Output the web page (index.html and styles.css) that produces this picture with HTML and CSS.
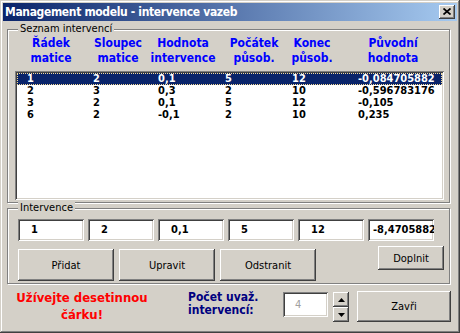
FILE: index.html
```html
<!DOCTYPE html>
<html lang="cs">
<head>
<meta charset="utf-8">
<title>Management modelu - intervence vazeb</title>
<link rel="stylesheet" href="styles.css">
</head>
<body>
<div class="window">
  <div class="titlebar">
    <span class="title">Management modelu - intervence vazeb</span>
    <div class="close">
      <svg width="8" height="7" viewBox="0 0 8 7"><path d="M0.5 0.5 L7.5 6.5 M7.5 0.5 L0.5 6.5" stroke="#000" stroke-width="1.7" fill="none"/></svg>
    </div>
  </div>
  <div class="content">
    <div class="frame frame-list">
      <span class="legend">Seznam intervencí</span>
      <div class="headers">
        <div class="hd">Řádek<br>matice</div>
        <div class="hd">Sloupec<br>matice</div>
        <div class="hd">Hodnota<br>intervence</div>
        <div class="hd">Počátek<br>působ.</div>
        <div class="hd">Konec<br>působ.</div>
        <div class="hd">Původní<br>hodnota</div>
      </div>
      <div class="listbox">
        <div class="row selected"><span>1</span><span>2</span><span>0,1</span><span>5</span><span>12</span><span>-0,084705882</span></div>
        <div class="row"><span>2</span><span>3</span><span>0,3</span><span>2</span><span>10</span><span>-0,596783176</span></div>
        <div class="row"><span>3</span><span>2</span><span>0,1</span><span>5</span><span>12</span><span>-0,105</span></div>
        <div class="row"><span>6</span><span>2</span><span>-0,1</span><span>2</span><span>10</span><span>0,235</span></div>
      </div>
    </div>
    <div class="frame frame-edit">
      <span class="legend">Intervence</span>
      <div class="fields">
        <div class="field">1</div>
        <div class="field">2</div>
        <div class="field">0,1</div>
        <div class="field">5</div>
        <div class="field">12</div>
        <div class="field field-long">-8,4705882353</div>
      </div>
      <div class="actions">
        <div class="btn btn-big">Přidat</div>
        <div class="btn btn-big">Upravit</div>
        <div class="btn btn-big">Odstranit</div>
        <div class="btn btn-small">Doplnit</div>
      </div>
    </div>
    <div class="footer">
      <div class="warning">Užívejte desetinnou<br>čárku!</div>
      <div class="count-label">Počet uvaž.<br>intervencí:</div>
      <div class="spin-input">4</div>
      <div class="spinner">
        <div class="spin-btn"><svg width="7" height="4" viewBox="0 0 7 4"><path d="M3.5 0 L7 4 L0 4 Z" fill="#000"/></svg></div>
        <div class="spin-btn"><svg width="7" height="4" viewBox="0 0 7 4"><path d="M0 0 L7 0 L3.5 4 Z" fill="#000"/></svg></div>
      </div>
      <div class="btn btn-close">Zavři</div>
    </div>
  </div>
</div>
</body>
</html>
```

FILE: styles.css
```css
* { box-sizing: border-box; }

html, body {
  margin: 0;
  background: #D4D0C8;
}

body {
  font-family: "DejaVu Sans Condensed", "DejaVu Sans", sans-serif;
  font-stretch: condensed;
  font-size: 11px;
  color: #000;
}

.window {
  width: 460px;
  height: 333px;
  padding: 3px;
  background: #D4D0C8;
  box-shadow: inset -1px -1px #404040, inset 1px 1px #D4D0C8,
              inset -2px -2px #808080, inset 2px 2px #FFFFFF;
  display: flex;
  flex-direction: column;
}

.titlebar {
  height: 18px;
  flex: none;
  display: flex;
  align-items: center;
  justify-content: space-between;
  padding: 0 2px 0 2px;
  background: linear-gradient(to right, #0A246A, #A6CAF0);
}

.title {
  color: #fff;
  font-weight: bold;
  font-size: 12px;
  letter-spacing: -0.35px;
  white-space: nowrap;
}

.close {
  width: 16px;
  height: 14px;
  background: #D4D0C8;
  box-shadow: inset -1px -1px #404040, inset 1px 1px #FFFFFF,
              inset -2px -2px #808080, inset 2px 2px #D4D0C8;
  display: flex;
  align-items: center;
  justify-content: center;
  padding-bottom: 1px;
}

.close svg { display: block; }

.content {
  padding: 8px 0 0 4px;
}

.frame {
  position: relative;
  width: 443px;
  border: 1px solid #808080;
  box-shadow: inset 1px 1px #FFFFFF, 1px 1px #FFFFFF;
}

.legend {
  position: absolute;
  top: -8px;
  left: 10px;
  padding: 0 2px;
  background: #D4D0C8;
  line-height: 13px;
  font-size: 11px;
  white-space: nowrap;
}

.frame-list {
  height: 174px;
  padding: 6px 0 2px 7px;
}

.headers {
  display: grid;
  grid-template-columns: 66px 68px 62px 80px 36px 126px;
  margin-left: 3px;
  height: 30px;
  font-weight: bold;
  font-size: 12px;
  line-height: 15px;
  color: #0000FF;
}

.hd {
  justify-self: center;
  text-align: center;
  white-space: nowrap;
}

.listbox {
  margin-top: 5px;
  width: 429px;
  height: 129px;
  background: #fff;
  padding: 2px;
  box-shadow: inset 1px 1px #808080, inset -1px -1px #FFFFFF,
              inset 2px 2px #404040, inset -2px -2px #D4D0C8;
}

.row {
  display: grid;
  grid-template-columns: 66px 65px 67px 67px 66px 1fr;
  height: 12px;
  line-height: 12px;
  padding-left: 10px;
  font-weight: bold;
  font-size: 11px;
  white-space: nowrap;
}

.row.selected {
  background: #0A246A;
  color: #fff;
  outline: 1px dotted #F5DB95;
  outline-offset: -1px;
}

.frame-edit {
  margin-top: 5px;
  height: 76px;
  padding: 10px 0 2px 10px;
}

.fields {
  display: grid;
  grid-template-columns: repeat(6, 66px);
  column-gap: 4px;
}

.field {
  height: 22px;
  line-height: 22px;
  background: #fff;
  padding-left: 13px;
  font-weight: bold;
  font-size: 11px;
  overflow: hidden;
  white-space: nowrap;
  box-shadow: inset 1px 1px #808080, inset -1px -1px #FFFFFF,
              inset 2px 2px #404040, inset -2px -2px #D4D0C8;
}

.field-long { padding-left: 5px; }

.actions {
  display: flex;
  align-items: flex-start;
  gap: 5px;
  margin-top: 8px;
}

.btn {
  display: flex;
  align-items: center;
  justify-content: center;
  background: #D4D0C8;
  box-shadow: inset -1px -1px #404040, inset 1px 1px #FFFFFF,
              inset -2px -2px #808080, inset 2px 2px #D4D0C8;
  font-size: 11px;
  white-space: nowrap;
}

.btn-big {
  width: 96px;
  height: 32px;
}

.btn-small {
  width: 66px;
  height: 24px;
  margin-left: auto;
  margin-right: 5px;
  margin-top: -3px;
}

.footer {
  display: flex;
  align-items: flex-start;
  margin-top: 7px;
  height: 31px;
}

.warning {
  width: 148px;
  margin-left: 1px;
  margin-top: -2px;
  text-align: center;
  color: #FF0000;
  font-weight: bold;
  font-size: 13px;
  line-height: 17px;
}

.count-label {
  width: 95px;
  margin-left: 32px;
  margin-top: 0;
  color: #000080;
  font-weight: bold;
  font-size: 12px;
  line-height: 13px;
  white-space: nowrap;
}

.spin-input {
  width: 45px;
  height: 25px;
  margin-top: 1px;
  line-height: 25px;
  padding-left: 12px;
  background: #fff;
  color: #A0A0A0;
  font-size: 11px;
  box-shadow: inset 1px 1px #808080, inset -1px -1px #FFFFFF,
              inset 2px 2px #404040, inset -2px -2px #D4D0C8;
}

.spinner {
  width: 16px;
  margin-left: 5px;
  margin-top: 1px;
  display: flex;
  flex-direction: column;
}

.spin-btn {
  height: 15px;
  display: flex;
  align-items: center;
  justify-content: center;
  background: #D4D0C8;
  box-shadow: inset -1px -1px #404040, inset 1px 1px #FFFFFF,
              inset -2px -2px #808080, inset 2px 2px #D4D0C8;
}

.spin-btn svg { display: block; }

.btn-close {
  width: 94px;
  height: 31px;
  margin-left: 8px;
}
```
